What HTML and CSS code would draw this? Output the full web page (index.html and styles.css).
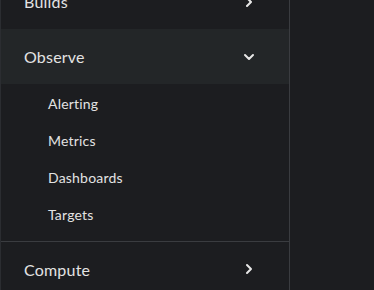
FILE: index.html
```html
<!DOCTYPE html>
<html lang="en">
<head>
  <meta charset="UTF-8">
  <title>Sidebar</title>
  <link rel="stylesheet" href="styles.css">
</head>
<body>
  <div class="layout">
    <nav class="sidebar">
      <div class="nav-group">
        <div class="nav-item">
          <span>Builds</span>
          <svg class="chevron" viewBox="0 0 16 16"><path d="M6 4l4 4-4 4"/></svg>
        </div>
      </div>
      <div class="nav-group open">
        <div class="nav-item active">
          <span>Observe</span>
          <svg class="chevron" viewBox="0 0 16 16"><path d="M4 6l4 4 4-4"/></svg>
        </div>
        <ul class="sub-list">
          <li>Alerting</li>
          <li>Metrics</li>
          <li>Dashboards</li>
          <li>Targets</li>
        </ul>
      </div>
      <div class="nav-group divided">
        <div class="nav-item">
          <span>Compute</span>
          <svg class="chevron" viewBox="0 0 16 16"><path d="M6 4l4 4-4 4"/></svg>
        </div>
      </div>
    </nav>
    <main class="content"></main>
  </div>
</body>
</html>
```

FILE: styles.css
```css
body {
  margin: 0;
  background: #1c1d20;
  font-family: 'Lato', 'Noto Sans', sans-serif;
  color: #e3e3e3;
  overflow: hidden;
}
.layout {
  display: flex;
  height: 290px;
}
.sidebar {
  width: 288px;
  border-left: 1px solid #2b2d31;
  border-right: 1px solid #3a3c40;
  background: #1c1d20;
  margin-top: -26px;
}
.content {
  flex: 1;
}
.nav-item {
  display: flex;
  align-items: center;
  justify-content: space-between;
  height: 55px;
  padding: 0 32px 0 23px;
  font-size: 16px;
  letter-spacing: 0.2px;
}
.nav-item.active {
  background: #232628;
}
.divided .nav-item {
  height: 54px;
}
.chevron {
  width: 16px;
  height: 16px;
  fill: none;
  stroke: #e8e8e8;
  stroke-width: 2;
  stroke-linecap: round;
  stroke-linejoin: round;
}
.sub-list {
  list-style: none;
  margin: 0;
  padding: 1px 0 8px;
}
.sub-list li {
  height: 37px;
  line-height: 37px;
  padding-left: 47px;
  font-size: 14px;
  letter-spacing: 0.2px;
}
.divided {
  border-top: 1px solid #3a3c40;
}
```
